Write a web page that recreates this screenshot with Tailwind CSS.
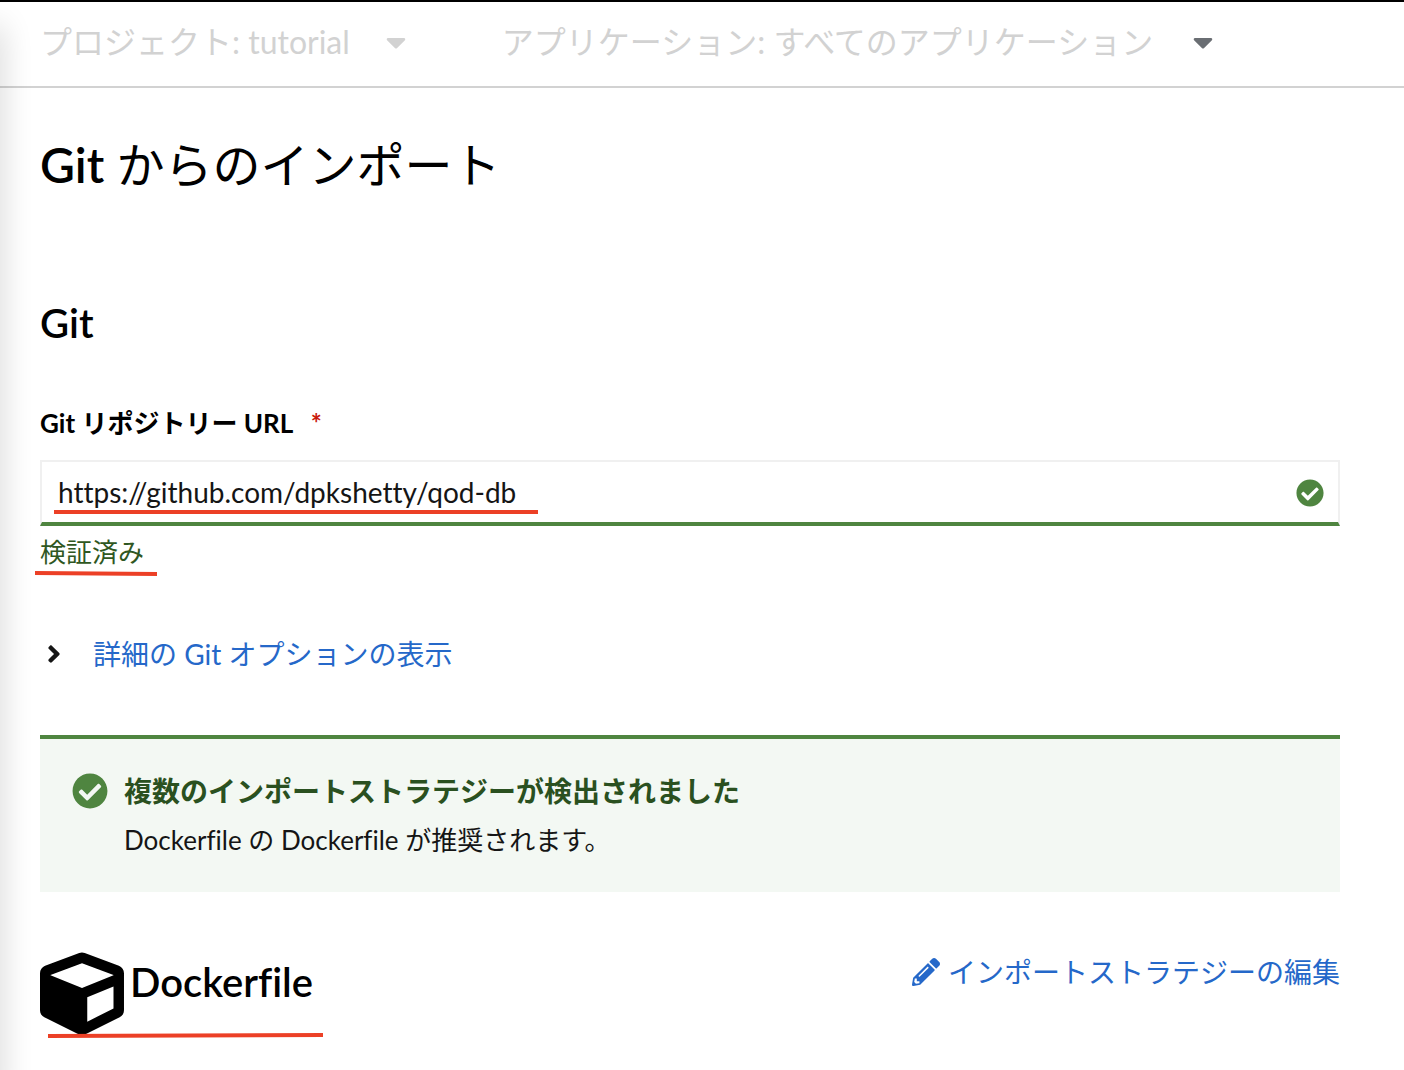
<!DOCTYPE html>
<html lang="ja">
<head>
<meta charset="utf-8">
<meta name="viewport" content="width=device-width, initial-scale=1">
<title>Git からのインポート</title>
<script src="https://cdn.jsdelivr.net/npm/@tailwindcss/browser@4"></script>
</head>
<body class="relative min-h-screen overflow-x-hidden border-t-2 border-black bg-white font-[Lato,'Noto_Sans_CJK_JP',sans-serif] text-[26px] leading-9 text-[#151515] [font-variant-ligatures:none]">
  <!-- shadow cast by the collapsed sidebar -->
  <div class="pointer-events-none absolute top-6 -bottom-8 -left-5 w-5 shadow-[0_0_32px_rgba(0,0,0,0.2)]"></div>

  <header class="flex h-[86px] items-center gap-24 border-b-2 border-[#d2d2d2] px-10 pb-1 text-[32px] text-[#d2d2d2]">
    <button type="button" class="flex items-center gap-9 whitespace-nowrap">
      <span>プロジェクト: tutorial</span>
      <svg class="h-8 w-5" viewBox="0 0 320 512" fill="currentColor" aria-hidden="true"><path d="M31.3 192h257.3c17.8 0 26.7 21.5 14.1 34.1L174.1 354.8c-7.8 7.8-20.5 7.8-28.3 0L17.2 226.1C4.6 213.5 13.5 192 31.3 192z"/></svg>
    </button>
    <button type="button" class="flex items-center gap-10 whitespace-nowrap">
      <span>アプリケーション: すべてのアプリケーション</span>
      <svg class="h-8 w-5 text-[#6a6e73]" viewBox="0 0 320 512" fill="currentColor" aria-hidden="true"><path d="M31.3 192h257.3c17.8 0 26.7 21.5 14.1 34.1L174.1 354.8c-7.8 7.8-20.5 7.8-28.3 0L17.2 226.1C4.6 213.5 13.5 192 31.3 192z"/></svg>
    </button>
  </header>

  <main class="pr-16 pl-10">
    <h1 class="pt-[45px] text-[48px] leading-[64px] text-black"><span class="font-semibold">Git</span> からのインポート</h1>

    <form>
      <h2 class="pt-[94px] text-[40px] leading-[64px] font-semibold text-black">Git</h2>

      <label for="repo" class="mt-[50px] block font-bold text-black">Git リポジトリー URL <span class="ml-3 text-[#c9190b]" aria-hidden="true">*</span></label>
      <div class="relative mt-[19px]">
        <input id="repo" type="text" value="https://github.com/dpkshetty/qod-db" aria-describedby="repo-status" class="block h-[66px] w-full border-2 border-b-4 border-[#f0f0f0] border-b-[#4f8540] bg-white px-4 text-[28px] outline-none">
        <svg class="absolute top-[19px] right-4 size-7 text-[#4f8540]" viewBox="0 0 512 512" fill="currentColor" aria-hidden="true"><path d="M504 256c0 136.967-111.033 248-248 248S8 392.967 8 256 119.033 8 256 8s248 111.033 248 248zM227.314 387.314l184-184c6.248-6.248 6.248-16.379 0-22.627l-22.627-22.627c-6.248-6.249-16.379-6.249-22.628 0L216 308.118l-70.059-70.059c-6.248-6.248-16.379-6.248-22.628 0l-22.627 22.627c-6.248 6.248-6.248 16.379 0 22.627l104 104c6.249 6.249 16.379 6.249 22.628.001z"/></svg>
        <div class="absolute top-[50px] left-[14px] h-1 w-[484px] bg-[#ec4026]"></div>
      </div>
      <div class="relative mt-2">
        <p id="repo-status" class="text-[#2f5722]">検証済み</p>
        <svg class="absolute top-9 -left-[5px] h-2 w-[122px]" viewBox="0 0 122 8" aria-hidden="true"><path d="M0 3l122 1" stroke="#ec4026" stroke-width="4"/></svg>
      </div>

      <button type="button" aria-expanded="false" class="mt-16 flex items-center gap-8 text-[28px] leading-10">
        <svg class="ml-[7px] h-7 w-[14px] text-[#151515]" viewBox="0 0 256 512" fill="currentColor" aria-hidden="true"><path d="M224.3 273l-136 136c-9.4 9.4-24.6 9.4-33.9 0l-22.6-22.6c-9.4-9.4-9.4-24.6 0-33.9l96.4-96.4-96.4-96.4c-9.4-9.4-9.4-24.6 0-33.9L54.3 103c9.4-9.4 24.6-9.4 33.9 0l136 136c9.5 9.4 9.5 24.6.1 34z"/></svg>
        <span class="text-[#2568c9]">詳細の Git オプションの表示</span>
      </button>

      <section class="mt-[61px] flex gap-4 border-t-4 border-[#4f8540] bg-[#f3f8f3] px-8 pt-8 pb-8">
        <svg class="mt-0.5 size-9 shrink-0 text-[#4f8540]" viewBox="0 0 512 512" fill="currentColor" aria-hidden="true"><path d="M504 256c0 136.967-111.033 248-248 248S8 392.967 8 256 119.033 8 256 8s248 111.033 248 248zM227.314 387.314l184-184c6.248-6.248 6.248-16.379 0-22.627l-22.627-22.627c-6.248-6.249-16.379-6.249-22.628 0L216 308.118l-70.059-70.059c-6.248-6.248-16.379-6.248-22.628 0l-22.627 22.627c-6.248 6.248-6.248 16.379 0 22.627l104 104c6.249 6.249 16.379 6.249 22.628.001z"/></svg>
        <div>
          <h3 class="text-[28px] leading-10 font-bold text-[#2a5020]">複数のインポートストラテジーが検出されました</h3>
          <p class="mt-[9px] leading-10">Dockerfile の Dockerfile が推奨されます。</p>
        </div>
      </section>

      <div class="flex items-start justify-between pt-[60px] pb-8">
        <div class="relative flex items-start gap-[6px]">
          <svg class="size-[84px]" viewBox="0 0 512 512" fill="#000" aria-hidden="true"><path d="M239.1 6.3l-208 78c-18.7 7-31.1 25-31.1 45v225.1c0 18.2 10.3 34.8 26.5 42.9l208 104c13.5 6.8 29.4 6.8 42.9 0l208-104c16.3-8.1 26.5-24.8 26.5-42.9V129.3c0-20-12.4-37.9-31.1-44.9l-208-78C262 2.2 250 2.2 239.1 6.3zM256 68.4l192 72v1.1l-192 78-192-78v-1.1l192-72zm32 356V275.5l160-65v133.9l-160 80z"/></svg>
          <h2 class="text-[40px] leading-[60px] font-semibold text-black">Dockerfile</h2>
          <svg class="absolute top-20 left-2 h-2 w-[275px]" viewBox="0 0 275 8" aria-hidden="true"><path d="M0 4l275-1" stroke="#ec4026" stroke-width="4"/></svg>
        </div>
        <a href="#" class="flex items-center gap-2 text-[28px] leading-10 text-[#2568c9]">
          <svg class="size-7" viewBox="0 0 512 512" fill="currentColor" aria-hidden="true"><path d="M497.9 142.1l-46.1 46.1c-4.7 4.7-12.3 4.7-17 0l-111-111c-4.7-4.7-4.7-12.3 0-17l46.1-46.1c18.7-18.7 49.1-18.7 67.9 0l60.1 60.1c18.8 18.7 18.8 49.1 0 67.9zM284.2 99.8L21.6 362.4.4 483.9c-2.9 16.4 11.4 30.6 27.8 27.8l121.5-21.3 262.6-262.6c4.7-4.7 4.7-12.3 0-17l-111-111c-4.8-4.7-12.4-4.7-17.1 0zM124.1 339.9c-5.5-5.5-5.5-14.3 0-19.8l154-154c5.5-5.5 14.3-5.5 19.8 0s5.5 14.3 0 19.8l-154 154c-5.5 5.5-14.3 5.5-19.8 0zM88 424h48v36.3l-64.5 11.3-31.1-31.1L51.7 376H88v48z"/></svg>
          <span>インポートストラテジーの編集</span>
        </a>
      </div>
    </form>
  </main>
</body>
</html>
